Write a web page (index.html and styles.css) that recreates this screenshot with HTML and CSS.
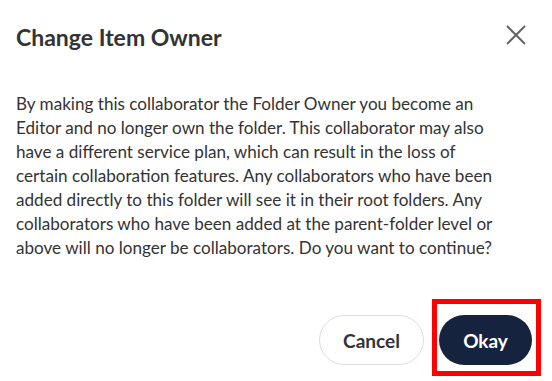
FILE: index.html
```html
<!DOCTYPE html>
<html>
<head>
<meta charset="utf-8">
<link rel="stylesheet" href="styles.css">
</head>
<body>
<div class="dialog">
  <div class="header">
    <h1 class="title">Change Item Owner</h1>
    <button class="close" aria-label="Close">
      <svg width="20" height="20" viewBox="0 0 20 20"><path d="M1 1L19 19M19 1L1 19" stroke="#666" stroke-width="2" fill="none"/></svg>
    </button>
  </div>
  <p class="message">By making this collaborator the Folder Owner you become an Editor and no longer own the folder. This collaborator may also have a different service plan, which can result in the loss of certain collaboration features. Any collaborators who have been added directly to this folder will see it in their root folders. Any collaborators who have been added at the parent-folder level or above will no longer be collaborators. Do you want to continue?</p>
  <div class="footer">
    <button class="btn btn-cancel">Cancel</button>
    <div class="okay-wrap">
      <button class="btn btn-okay">Okay</button>
      <div class="highlight"></div>
    </div>
  </div>
</div>
</body>
</html>
```
FILE: styles.css
```css
html, body {
  margin: 0;
  padding: 0;
  background: #fff;
}
body {
  font-family: Lato, "Open Sans", sans-serif;
  color: #333;
  width: 552px;
  height: 381px;
  overflow: hidden;
}
.dialog {
  padding: 0 20px 0 16px;
}
.header {
  display: flex;
  justify-content: space-between;
  align-items: center;
  padding-top: 21px;
  height: 32px;
}
.title {
  margin: 0;
  font-size: 23px;
  font-weight: 700;
  line-height: 32px;
  color: #333;
}
.close {
  border: 0;
  background: none;
  padding: 0;
  width: 20px;
  height: 20px;
  margin-right: 6px;
  margin-top: -5px;
  cursor: pointer;
}
.close svg { display: block; }
.message {
  margin: 39px 0 0 0;
  width: 492px;
  font-size: 17.1px;
  line-height: 24px;
  color: #333;
}
.footer {
  display: flex;
  justify-content: flex-end;
  align-items: center;
  gap: 15px;
  margin-top: 55px;
}
.btn {
  font-family: Lato, "Open Sans", sans-serif;
  font-weight: 700;
  font-size: 19px;
  height: 50px;
  border-radius: 25px;
  cursor: pointer;
}
.btn-cancel {
  width: 105px;
  background: #fff;
  border: 1px solid #ddd;
  color: #333;
}
.okay-wrap {
  position: relative;
}
.btn-okay {
  display: block;
  width: 93px;
  background: #16233f;
  border: 0;
  color: #fff;
}
.highlight {
  position: absolute;
  left: -7px;
  top: -16px;
  width: 99px;
  height: 67px;
  border: 5px solid #f00;
  pointer-events: none;
}
```
